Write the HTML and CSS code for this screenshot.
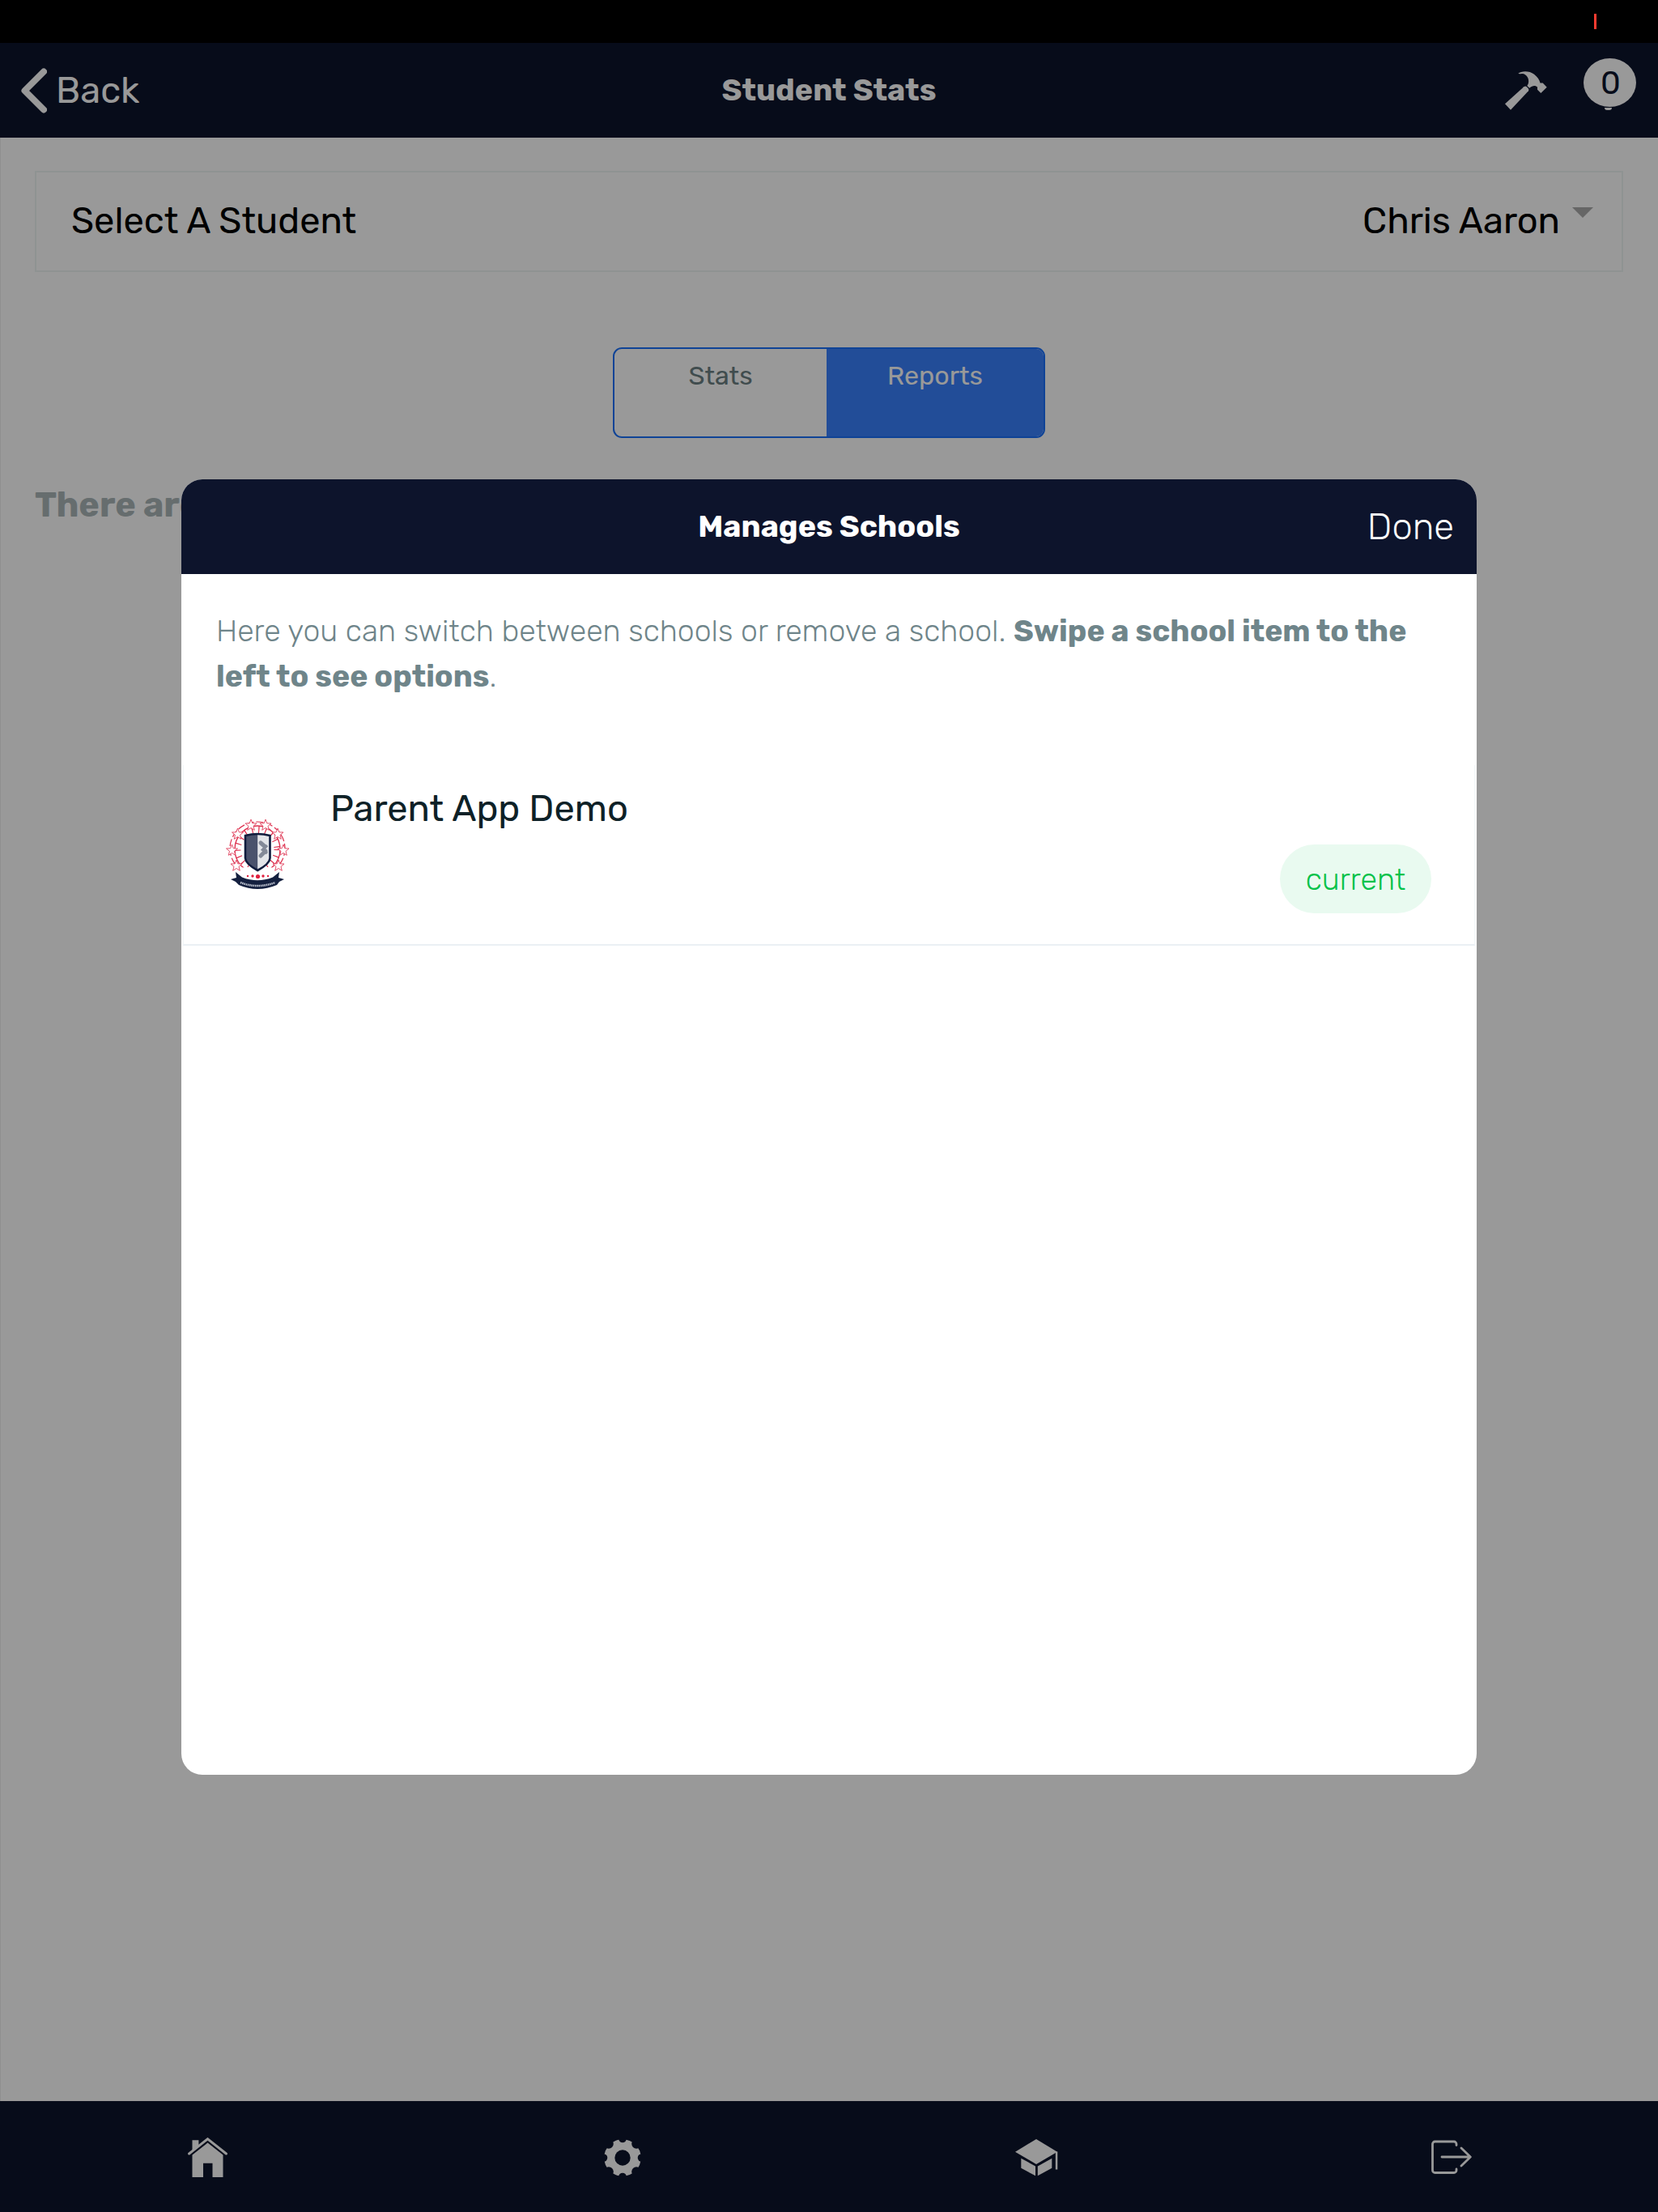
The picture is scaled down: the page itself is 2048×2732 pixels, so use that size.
FILE: index.html
```html
<!DOCTYPE html>
<html lang="en">
<head>
  <meta charset="UTF-8" />
  <title>Student Stats</title>
  <link rel="stylesheet" href="styles.css">
</head>
<body>

<div class="app">
  <div class="status-bar"></div>

  <header class="toolbar">
    <div class="back">
      <svg width="32" height="56" viewBox="0 0 32 56" fill="none" stroke="#fff" stroke-width="8" stroke-linecap="round" stroke-linejoin="round"><path d="M28 4.500L4.500 28L28 51.500"/></svg>
      <span>Back</span>
    </div>
    <h1 class="title">Student Stats</h1>
    <div class="actions">
      <svg width="52" height="48" viewBox="0 0 52 48" fill="#fff">
        <path d="M0 40.300L7 47.700L29 24.200Q30 22.500 28.600 21L26.500 19Q25 18 23.300 19.300Z"/>
        <path d="M16.300 2.700C20-.5 30-1 36 3.700C40 7 42.500 10 43.500 14.500L46.700 14.500L51.700 19.700L44.300 27L40 22.700V19.500C38 17.500 34 17 30.300 20.800L27.300 18C30.500 14 30 5 22 3C20 2.500 18 3.800 16.300 2.700Z"/>
      </svg>
      <div class="bell">
        <span class="badge">0</span>
        <span class="clapper"></span>
      </div>
    </div>
  </header>

  <main class="content">
    <div class="select">
      <span>Select A Student</span>
      <span class="value">Chris Aaron<i class="arrow"></i></span>
    </div>
    <div class="segment">
      <div class="seg">Stats</div>
      <div class="seg active">Reports</div>
    </div>
    <h2 class="empty">There are</h2>
  </main>

  <nav class="tabs">
    <div class="tab">
      <svg width="49" height="49" viewBox="0 0 49 49" fill="#fff">
        <path d="M5.500 3.300H13.400V10.500L5.500 17Z"/>
        <path d="M24.500 6.500L43.500 21.500V49H30.500V31.700H19V49H5.500V21.500Z"/>
        <path d="M1.600 20L24.500 1.800L47.400 20" fill="none" stroke="#fff" stroke-width="3" stroke-linecap="round"/>
      </svg>
    </div>
    <div class="tab">
      <svg width="46" height="46" viewBox="-23 -23 46 46">
        <mask id="teeth">
          <circle r="22.800" fill="#fff"/>
          <circle r="9.700"/>
          <circle cx="0" cy="-23.500" r="4.800"/>
          <circle cx="0" cy="23.500" r="4.800"/>
          <circle cx="-23.500" cy="0" r="4.800"/>
          <circle cx="23.500" cy="0" r="4.800"/>
          <circle cx="-17.200" cy="-17.200" r="6"/>
          <circle cx="17.200" cy="-17.200" r="6"/>
          <circle cx="-17.200" cy="17.200" r="6"/>
          <circle cx="17.200" cy="17.200" r="6"/>
        </mask>
        <rect x="-23" y="-23" width="46" height="46" fill="#fff" mask="url(#teeth)"/>
      </svg>
    </div>
    <div class="tab">
      <svg width="53" height="46" viewBox="0 0 53 46" fill="#fff">
        <path d="M26 0L52 15.700L26 31L0 15.700Z"/>
        <path d="M7.300 23.700L25 33.500V45.300L7.300 35.700Z"/>
        <path d="M45.300 23.700L27.800 33.500V45.300L45.300 35.700Z"/>
        <path d="M49.800 15.500H52.300V37.500H49.800Z"/>
      </svg>
    </div>
    <div class="tab">
      <svg width="50" height="43" viewBox="0 0 50 43" fill="none" stroke="#fff" stroke-width="2.800" stroke-linecap="round" stroke-linejoin="round">
        <path d="M31 6.500V5a3 3 0 0 0-3-3H4.500a3 3 0 0 0-3 3v32.500a3 3 0 0 0 3 3H28a3 3 0 0 0 3-3V36"/>
        <path d="M13 21H48M37 10L48.300 21L37 32"/>
      </svg>
    </div>
  </nav>
</div>

<div class="overlay">
  <div class="recording"></div>
  <div class="modal">
    <header class="toolbar modal-bar">
      <span></span>
      <h1 class="title">Manages Schools</h1>
      <span class="done">Done</span>
    </header>
    <p class="help">Here you can switch between schools or remove a school. <b>Swipe a school item to the left to see options</b>.</p>
    <div class="school">
      <svg class="logo" width="78" height="87" viewBox="0 0 78 87">
        <defs>
          <path id="star" d="M0-7L1.800-2.200L7-2L3 1.300L4.300 6.300L0 3.500L-4.300 6.300L-3 1.300L-7-2L-1.800-2.200Z" fill="#fff" stroke="#e0405c" stroke-width=".9"/>
        </defs>
        <g fill="none" stroke="#dd2f4d">
          <ellipse cx="39" cy="38" rx="28" ry="29" stroke-width="1.300"/>
          <ellipse cx="39" cy="37" rx="34" ry="33" stroke-width="1.200" stroke-dasharray="9 3"/>
          <ellipse cx="39" cy="38" rx="24.500" ry="24" stroke-width="8" stroke-dasharray="1.200 7"/>
        </g>
        <path d="M12 62L24 60H54L66 62L58 75H20Z" fill="#fff"/>
        <use href="#star" x="31" y="8"/>
        <use href="#star" x="49" y="8"/>
        <use href="#star" x="14.500" y="19"/>
        <use href="#star" x="64" y="19"/>
        <use href="#star" x="7.500" y="39"/>
        <use href="#star" x="71" y="39"/>
        <use href="#star" x="13" y="58"/>
        <use href="#star" x="65" y="58"/>
        <path d="M24 21Q39 17 54.500 21V49Q54 56 39.200 64Q24.500 56 24 49Z" fill="#e3e5e9"/>
        <path d="M24 21Q32 18.500 39.200 19V64Q24.500 56 24 49Z" fill="#4a526c"/>
        <path d="M43 30L47 33.500M49 40L43 46" fill="none" stroke="#848a98" stroke-width="5" stroke-linecap="round"/>
        <path d="M51 33L45.500 38.500L51 43" fill="none" stroke="#848a98" stroke-width="3.500"/>
        <path d="M24 21Q39 17 54.500 21V49Q54 56 39.200 64Q24.500 56 24 49Z" fill="none" stroke="#101c3d" stroke-width="2.600"/>
        <g fill="#e0203f">
          <circle cx="27" cy="71" r="1.200"/>
          <circle cx="33" cy="71" r="1.700"/>
          <circle cx="39.500" cy="71.500" r="2.600"/>
          <circle cx="46" cy="71" r="1.700"/>
          <circle cx="52" cy="71" r="1.200"/>
        </g>
        <path d="M12 66L20 72.500Q39 80 58 72.500L66 66L65 73L72 75L66 78L63 82Q39 92 16 82L12 78L6 75L13 73Z" fill="#14203f"/>
        <path d="M18 79Q39 87 61 79" fill="none" stroke="#c3c8d4" stroke-width="2.500" stroke-dasharray="1.500 .8"/>
      </svg>
      <div class="info">
        <div class="name">Parent App Demo</div>
        <span class="pill">current</span>
      </div>
    </div>
  </div>
</div>

</body>
</html>
```
FILE: styles.css
```css
* {
  box-sizing: border-box;
}

body {
  margin: 0;
  font-family: Rubik, Inter, Roboto, sans-serif;
  font-size: 45.2px;
  color: #000;
}

svg {
  display: block;
}

.app {
  height: 2732px;
  display: flex;
  flex-direction: column;
  background: #fff;
}

.status-bar {
  height: 53px;
  background: #000;
}

.toolbar {
  height: 117px;
  display: grid;
  grid-template-columns: 1fr auto 1fr;
  align-items: center;
  background: #0d142c;
  color: #fff;
}

.title {
  margin: 0;
  padding-bottom: 2px;
  font-size: 37.6px;
  font-weight: 700;
}

.back {
  display: flex;
  align-items: center;
  gap: 11px;
  padding-left: 26px;
}

.back span {
  padding-bottom: 1px;
}

.actions {
  display: flex;
  justify-content: flex-end;
  align-items: center;
  gap: 45px;
  padding-right: 27px;
}

.bell {
  display: flex;
  flex-direction: column;
  align-items: center;
  gap: 1px;
  height: 79px;
}

.badge {
  width: 65px;
  height: 60px;
  padding-left: 2px;
  border-radius: 50%;
  background: #fff;
  color: #0d142c;
  font-size: 39px;
  line-height: 63px;
  text-align: center;
}

.clapper {
  width: 9px;
  height: 3px;
  margin-right: 4px;
  border-radius: 0 0 5px 5px;
  background: #fff;
}

.content {
  flex: 1;
  margin-right: 1px;
  padding: 41px 42px;
  border-left: 1px solid #eee;
}

.select {
  height: 125px;
  display: flex;
  justify-content: space-between;
  align-items: center;
  padding: 0 35px 2px 43px;
  border: 2px solid #eff5f4;
}

.value {
  display: flex;
  align-items: center;
  gap: 15px;
}

.arrow {
  border: 13px solid transparent;
  border-top-color: #aaa;
  border-bottom: 0;
  margin-bottom: 20px;
}

.segment {
  width: 534px;
  height: 112px;
  display: flex;
  margin: 93px auto 58px;
  border: 2px solid #1a70fa;
  border-radius: 11px;
  overflow: hidden;
}

.seg {
  width: 262px;
  padding-top: 13px;
  font-size: 32.2px;
  line-height: 41px;
  text-align: center;
  color: #6b7f83;
}

.seg.active {
  flex: 1;
  background: #3981fe;
  color: #fff;
}

.empty {
  margin: 0;
  font-size: 43px;
  font-weight: 700;
  line-height: 50px;
  color: #abb6b8;
}

.tabs {
  height: 137px;
  display: flex;
  background: #0d142c;
}

.tab {
  flex: 1;
  display: flex;
  justify-content: center;
  align-items: center;
  padding: 2px 0 0 1px;
}

/* Dimmed backdrop behind the dialog */
.overlay {
  position: absolute;
  top: 0;
  left: 0;
  width: 2048px;
  height: 2732px;
  display: flex;
  justify-content: center;
  align-items: center;
  padding-top: 52px;
  background: rgba(0, 0, 0, 0.4);
}

.recording {
  position: absolute;
  top: 17px;
  left: 1969px;
  width: 3px;
  height: 19px;
  background: #ff3b30;
}

.modal {
  width: 1600px;
  height: 1600px;
  border-radius: 26px;
  background: #fff;
  overflow: hidden;
}

.done {
  padding-right: 28px;
  text-align: right;
  font-weight: 300;
}

.help {
  margin: 0;
  padding: 42px 60px 82px 43px;
  font-size: 37.4px;
  font-weight: 300;
  line-height: 56px;
  color: #6f858a;
}

.help b {
  font-weight: 700;
}

.school {
  height: 223px;
  display: flex;
  gap: 51px;
  margin: 0 2px;
  padding: 26px 53px 0 52px;
  border: 1px solid #f3f8fa;
  border-bottom: 2px solid #ebf0f4;
  border-top: 0;
}

.logo {
  margin-top: 40px;
}

.info {
  flex: 1;
  display: flex;
  flex-direction: column;
}

.name {
  line-height: 55px;
  color: #0e2127;
}

.pill {
  align-self: flex-end;
  width: 187px;
  height: 85px;
  margin-top: 17px;
  border-radius: 43px;
  background: #e9faf0;
  color: #06c24a;
  font-size: 37.5px;
  font-weight: 300;
  line-height: 86px;
  text-align: center;
}
```
